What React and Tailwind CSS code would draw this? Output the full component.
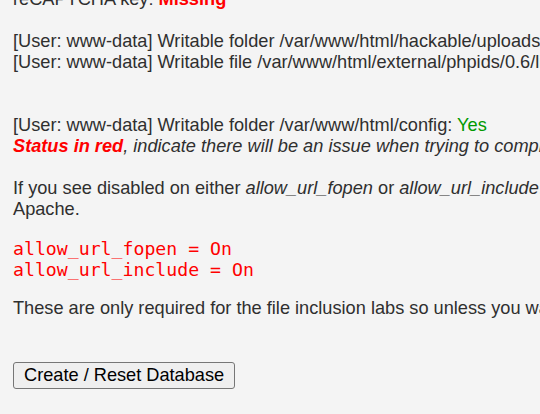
import React from "react";

const sans = { fontFamily: '"Liberation Sans", Arial, sans-serif' };

export default function App() {
  return (
    <div className="w-[540px] h-[414px] overflow-hidden bg-[#f4f4f4] text-[#2f2f2f]" style={sans}>
      <div className="pl-[13px] -mt-[11px] text-[18.2px] leading-[21px] whitespace-nowrap">
        <div>
          reCAPTCHA key: <span className="font-bold text-[#ff0000]">Missing</span>
        </div>
        <div className="h-[21px]" />
        <div>[User: www-data] Writable folder /var/www/html/hackable/uploads/: <span className="text-[#009900]">Yes</span></div>
        <div>[User: www-data] Writable file /var/www/html/external/phpids/0.6/lib/IDS/tmp/phpids_log.txt: <span className="text-[#009900]">Yes</span></div>
        <div className="h-[42px]" />
        <div>[User: www-data] Writable folder /var/www/html/config: <span className="text-[#009900]">Yes</span></div>
        <div className="italic">
          <span className="font-bold text-[#ff0000]">Status in red</span>, indicate there will be an issue when trying to complete some modules.
        </div>
        <div className="h-[21px]" />
        <div>
          If you see disabled on either <i>allow_url_fopen</i> or <i>allow_url_include</i>, set the following in your php.ini file and restart
        </div>
        <div>Apache.</div>
        <pre className="my-[18px] text-[#ff0000] font-['DejaVu_Sans_Mono',monospace] text-[18.2px] leading-[21px]">
          {"allow_url_fopen = On\nallow_url_include = On"}
        </pre>
        <div>These are only required for the file inclusion labs so unless you want to play with those, you can ignore them.</div>
        <div className="h-[43px]" />
        <button className="h-[27px] px-[10px] bg-[#efefef] border border-[#767676] rounded-[3px] text-black text-[18.2px] leading-[21px]" style={sans}>
          Create / Reset Database
        </button>
      </div>
    </div>
  );
}
